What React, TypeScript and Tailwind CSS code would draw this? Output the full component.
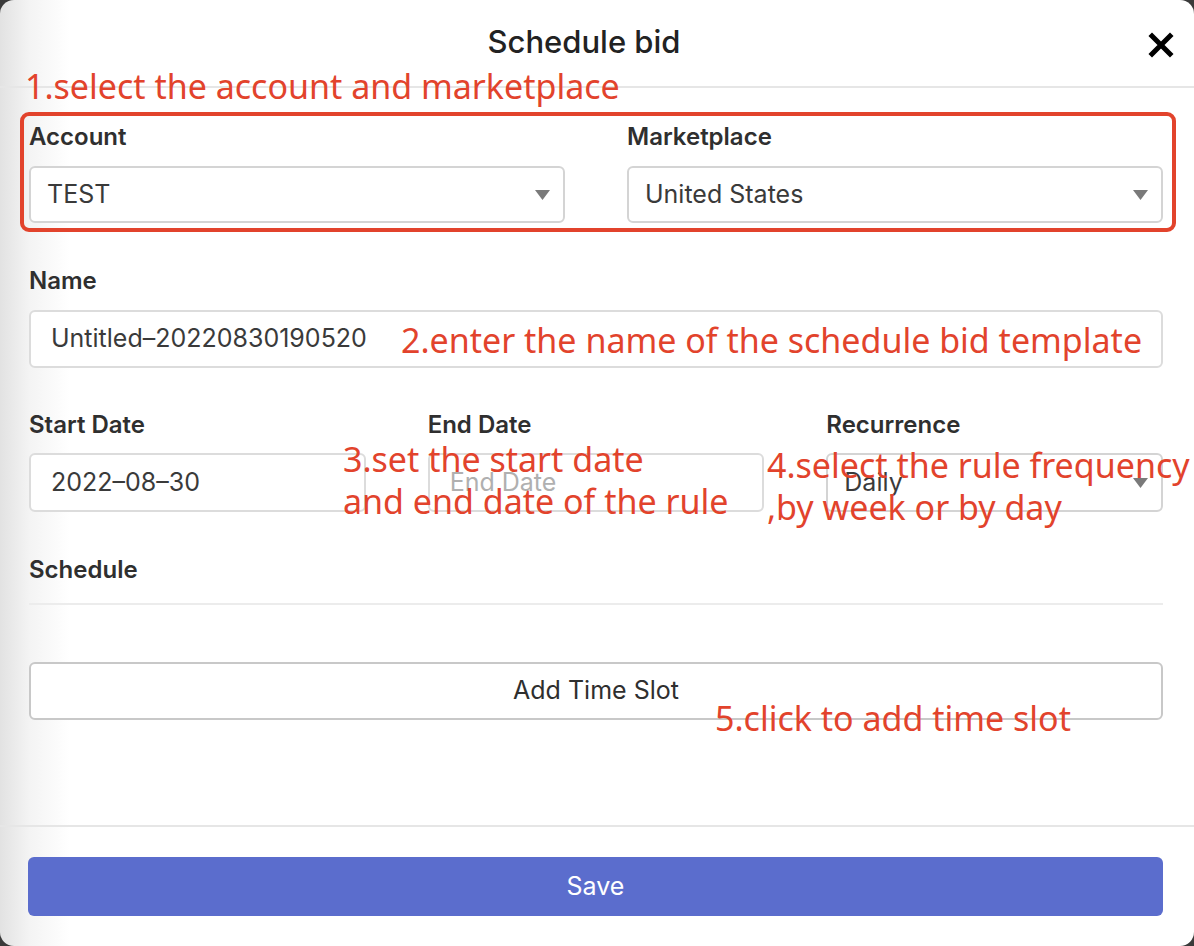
import React from "react";

const ui = { fontFamily: 'Inter, "Liberation Sans", Arial, sans-serif' };
const note = { fontFamily: '"Noto Sans", "Liberation Sans", sans-serif' };

function Arrow() {
  return (
    <svg width="15" height="10" viewBox="0 0 15 10" className="shrink-0">
      <path d="M0 0 L15 0 L7.5 10 Z" fill="#7a7a7a" />
    </svg>
  );
}

function Select({ value }: { value: string }) {
  return (
    <div className="h-[57px] rounded-[6px] border-2 border-[#d4d4d4] bg-white flex items-center justify-between pl-[16px] pr-[13px] text-[25px] text-[#3a3a3a]">
      <span>{value}</span>
      <Arrow />
    </div>
  );
}

function Label({ children }: { children: React.ReactNode }) {
  return <div className="h-[28px] leading-[28px] text-[24px] font-semibold text-[#2f2f2f]">{children}</div>;
}

export default function App() {
  return (
    <div className="relative w-[1194px] h-[946px] overflow-hidden bg-[#3a3a3a]" style={ui}>
      <div className="relative h-full rounded-[14px] bg-[linear-gradient(to_right,#e2e2e2_0px,#f4f4f4_30px,#ffffff_70px)] flex flex-col">
        <div className="h-[88px] border-b-2 border-[#e6e6e6] flex items-center justify-center relative">
          <div className="text-[31px] text-[#222] font-medium mt-[-2px] mr-[26px]">Schedule bid</div>
          <div className="absolute right-[20px] top-[32px]">
            <svg width="26" height="26" viewBox="0 0 26 26">
              <path d="M4 4 L22 22 M22 4 L4 22" stroke="#000" strokeWidth="5" strokeLinecap="square" />
            </svg>
          </div>
        </div>

        <div className="pl-[29px] pr-[31px] flex flex-col">
          <div className="mt-[35px] grid grid-cols-2 gap-x-[62px]">
            <div className="flex flex-col gap-[15px]">
              <Label>Account</Label>
              <Select value="TEST" />
            </div>
            <div className="flex flex-col gap-[15px]">
              <Label>Marketplace</Label>
              <Select value="United States" />
            </div>
          </div>

          <div className="mt-[44px] flex flex-col gap-[15px]">
            <Label>Name</Label>
            <div className="h-[58px] rounded-[6px] border-2 border-[#dcdcdc] bg-white flex items-center pl-[20px] text-[25px] text-[#3a3a3a]">
              Untitled–20220830190520
            </div>
          </div>

          <div className="mt-[43px] grid grid-cols-3 gap-x-[62px]">
            <div className="flex flex-col gap-[14px]">
              <Label>Start Date</Label>
              <div className="h-[59px] rounded-[6px] border-2 border-[#dcdcdc] bg-white flex items-center pl-[20px] text-[25px] text-[#3a3a3a]">
                2022–08–30
              </div>
            </div>
            <div className="flex flex-col gap-[14px]">
              <Label>End Date</Label>
              <div className="h-[59px] rounded-[6px] border-2 border-[#dcdcdc] bg-white flex items-center pl-[20px] text-[25px] text-[#b0b0b0]">
                End Date
              </div>
            </div>
            <div className="flex flex-col gap-[14px]">
              <Label>Recurrence</Label>
              <div className="h-[59px] rounded-[6px] border-2 border-[#d4d4d4] bg-white flex items-center justify-between pl-[16px] pr-[13px] text-[25px] text-[#3a3a3a]">
                <span>Daily</span>
                <Arrow />
              </div>
            </div>
          </div>

          <div className="mt-[44px]">
            <Label>Schedule</Label>
          </div>
          <div className="mt-[19px] h-[2px] bg-[#ececec]" />

          <div className="mt-[57px] h-[58px] rounded-[6px] border-2 border-[#c8c8c8] bg-white flex items-center justify-center text-[25px] text-[#2f2f2f]">
            Add Time Slot
          </div>
        </div>

        <div className="mt-[105px] border-t-2 border-[#e6e6e6] pl-[28px] pr-[31px] pt-[30px]">
          <div className="h-[59px] rounded-[6px] bg-[#5b6dcd] flex items-center justify-center text-[25px] text-white">
            Save
          </div>
        </div>

        {/* annotations */}
        <div className="absolute left-[20px] top-[112px] w-[1156px] h-[120px] rounded-[9px] border-4 border-[#e2432c]" />
        <div className="absolute left-[25px] top-[64px] text-[34px] leading-[44px] text-[#e2432c] whitespace-nowrap" style={note}>
          1.select the account and marketplace
        </div>
        <div className="absolute left-[401px] top-[318px] text-[34px] leading-[44px] text-[#e2432c] whitespace-nowrap" style={note}>
          2.enter the name of the schedule bid template
        </div>
        <div className="absolute left-[343px] top-[438px] text-[34px] leading-[42px] text-[#e2432c] whitespace-nowrap" style={note}>
          3.set the start date
          <br />
          and end date of the rule
        </div>
        <div className="absolute left-[767px] top-[444px] text-[34px] leading-[42px] text-[#e2432c] whitespace-nowrap" style={note}>
          4.select the rule frequency
          <br />
          ,by week or by day
        </div>
        <div className="absolute left-[715px] top-[696px] text-[34px] leading-[44px] text-[#e2432c] whitespace-nowrap" style={note}>
          5.click to add time slot
        </div>
      </div>
    </div>
  );
}
